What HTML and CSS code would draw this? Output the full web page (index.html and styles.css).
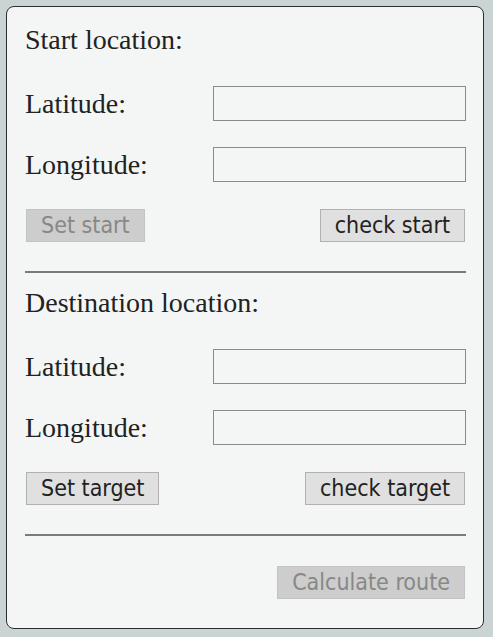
FILE: index.html
```html
<!DOCTYPE html>
<html>
<head>
<meta charset="utf-8">
<link rel="stylesheet" href="styles.css">
</head>
<body>
<div class="card">
  <section class="section">
    <div class="title">Start location:</div>
    <div class="row"><label class="label">Latitude:</label><input class="field" type="text"></div>
    <div class="row"><label class="label">Longitude:</label><input class="field" type="text"></div>
    <div class="buttons">
      <button class="btn" disabled>Set start</button>
      <button class="btn">check start</button>
    </div>
  </section>
  <hr class="rule">
  <section class="section second">
    <div class="title">Destination location:</div>
    <div class="row"><label class="label">Latitude:</label><input class="field" type="text"></div>
    <div class="row"><label class="label">Longitude:</label><input class="field" type="text"></div>
    <div class="buttons">
      <button class="btn">Set target</button>
      <button class="btn">check target</button>
    </div>
  </section>
  <hr class="rule">
  <div class="footer">
    <button class="btn" disabled>Calculate route</button>
  </div>
</div>
</body>
</html>
```

FILE: styles.css
```css
html, body {
  margin: 0;
  padding: 0;
}
body {
  background: #cbd4d4;
  width: 493px;
  height: 637px;
  overflow: hidden;
}
.card {
  box-sizing: border-box;
  margin: 6px 0 0 6px;
  width: 478px;
  height: 623px;
  background: #f4f6f5;
  border: 1px solid #2a2e2e;
  border-radius: 8px;
  padding: 0 17px 0 18px;
  font-family: "Liberation Serif", "Times New Roman", serif;
  color: #222;
}
.section {
  display: flex;
  flex-direction: column;
  gap: 26px;
  padding-top: 18px;
}
.section.second {
  padding-top: 15px;
}
.title, .row, .buttons {
  height: 35px;
  display: flex;
  align-items: center;
}
.title {
  align-items: flex-start;
}
.title, .label {
  font-size: 28px;
  line-height: 35px;
}
.title {
  line-height: 30px;
}
.label {
  width: 188px;
  flex: none;
}
.field {
  box-sizing: border-box;
  width: 253px;
  height: 35px;
  margin: 0;
  border: 1px solid #8a8a8a;
  background: #f4f6f5;
  padding: 0 4px;
  outline: none;
}
.buttons {
  justify-content: space-between;
  padding: 0 1px;
}
.btn {
  box-sizing: border-box;
  height: 33px;
  margin: 0;
  padding: 0 14px;
  font-family: "DejaVu Sans Condensed", "DejaVu Sans", sans-serif;
  font-size: 23px;
  line-height: 31px;
  color: #222;
  background: #dfe0df;
  border: 1px solid #b0b1b0;
  border-radius: 0;
}
.btn:disabled {
  background: #cccdcc;
  color: #878887;
  border-color: #c2c3c2;
}
.rule {
  margin: 28px 0 0 0;
  height: 0;
  border: 0;
  border-top: 2px solid #7a7c7b;
}
.footer {
  display: flex;
  justify-content: flex-end;
  padding: 30px 1px 0 0;
}
```
